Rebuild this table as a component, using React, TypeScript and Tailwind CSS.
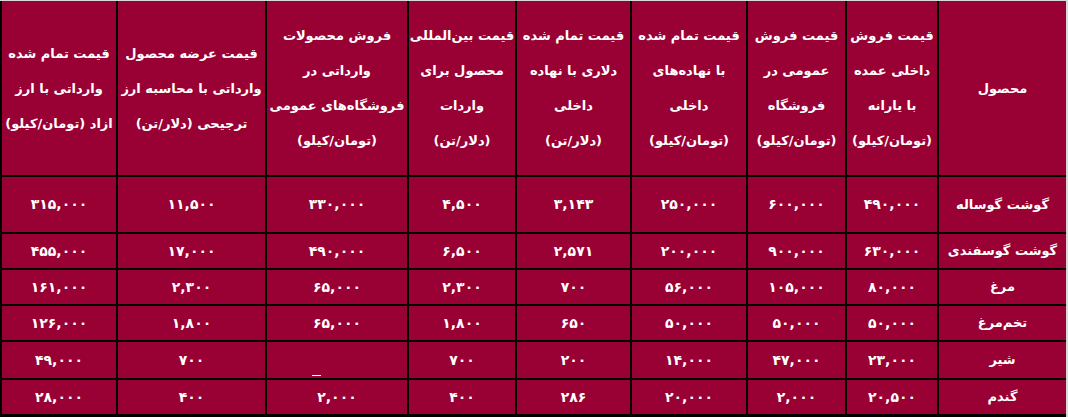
const headers: string[][] = [
  ["محصول"],
  ["قیمت فروش", "داخلی عمده", "با یارانه", "(تومان/کیلو)"],
  ["قیمت فروش", "عمومی در", "فروشگاه", "(تومان/کیلو)"],
  ["قیمت تمام شده", "با نهاده‌های", "داخلی", "(تومان/کیلو)"],
  ["قیمت تمام شده", "دلاری با نهاده", "داخلی", "(دلار/تن)"],
  ["قیمت بین‌المللی", "محصول برای", "واردات", "(دلار/تن)"],
  ["فروش محصولات", "وارداتی در", "فروشگاه‌های عمومی", "(تومان/کیلو)"],
  ["قیمت عرضه محصول", "وارداتی با محاسبه ارز", "ترجیحی (دلار/تن)"],
  ["قیمت تمام شده", "وارداتی با ارز", "ازاد (تومان/کیلو)"],
];

const rows: string[][] = [
  ["گوشت گوساله", "۴۹۰,۰۰۰", "۶۰۰,۰۰۰", "۲۵۰,۰۰۰", "۳,۱۴۳", "۴,۵۰۰", "۳۳۰,۰۰۰", "۱۱,۵۰۰", "۳۱۵,۰۰۰"],
  ["گوشت گوسفندی", "۶۳۰,۰۰۰", "۹۰۰,۰۰۰", "۲۰۰,۰۰۰", "۲,۵۷۱", "۶,۵۰۰", "۴۹۰,۰۰۰", "۱۷,۰۰۰", "۴۵۵,۰۰۰"],
  ["مرغ", "۸۰,۰۰۰", "۱۰۵,۰۰۰", "۵۶,۰۰۰", "۷۰۰", "۲,۳۰۰", "۶۵,۰۰۰", "۲,۳۰۰", "۱۶۱,۰۰۰"],
  ["تخم‌مرغ", "۵۰,۰۰۰", "۵۰,۰۰۰", "۵۰,۰۰۰", "۶۵۰", "۱,۸۰۰", "۶۵,۰۰۰", "۱,۸۰۰", "۱۲۶,۰۰۰"],
  ["شیر", "۲۳,۰۰۰", "۴۷,۰۰۰", "۱۴,۰۰۰", "۲۰۰", "۷۰۰", "", "۷۰۰", "۴۹,۰۰۰"],
  ["گندم", "۲۰,۵۰۰", "۲,۰۰۰", "۲۰,۰۰۰", "۲۸۶", "۴۰۰", "۲,۰۰۰", "۴۰۰", "۲۸,۰۰۰"],
];

export default function App() {
  return (
    <div
      className="w-[1068px] h-[417px] bg-[#d9d9d9] pt-px"
      style={{ fontFamily: '"DejaVu Sans", sans-serif' }}
    >
      <div
        dir="rtl"
        className="w-[1066px] grid gap-[2px] bg-black pl-[2px] pb-[3px] grid-cols-[127px_90px_97px_114px_113px_106px_140px_147px_114px] grid-rows-[174px_55px_34px_34px_34px_36px_34px] text-white font-bold text-[13px]"
      >
        {headers.map((lines, i) => (
          <div
            key={i}
            className="bg-[#990033] flex flex-col items-center justify-center text-center leading-[35px] whitespace-nowrap"
          >
            {lines.map((l, j) => (
              <span key={j}>{l}</span>
            ))}
          </div>
        ))}
        {rows.map((row, r) =>
          row.map((cell, c) =>
            cell === "" ? (
              <div key={`${r}-${c}`} className="bg-[#990033] flex items-end justify-center">
                <span className="block w-[9px] h-px bg-white mb-[2px] mr-[42px]" />
              </div>
            ) : (
              <div
                key={`${r}-${c}`}
                className={`bg-[#990033] flex items-center justify-center whitespace-nowrap ${
                  c === 0 ? "" : "text-[14px] tracking-[2.5px]"
                }`}
              >
                {cell}
              </div>
            )
          )
        )}
      </div>
    </div>
  );
}
